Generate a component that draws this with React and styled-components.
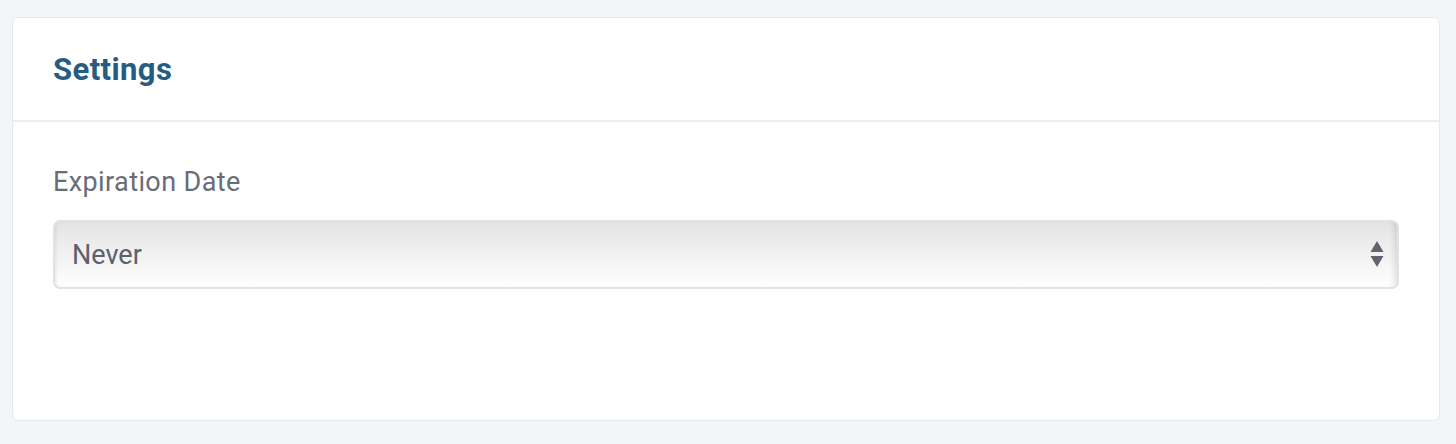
import React, { useState } from "react";
import styled, { createGlobalStyle } from "styled-components";

const GlobalStyle = createGlobalStyle`
  body {
    margin: 0;
    background: #f3f6f9;
    font-family: Roboto, "Liberation Sans", sans-serif;
  }
`;

const Page = styled.div`
  padding: 17px 16px 21px 12px;
`;

const Card = styled.section`
  background: #ffffff;
  border: 1px solid #e4e9ee;
  border-radius: 7px;
  height: 404px;
  box-sizing: border-box;
  display: flex;
  flex-direction: column;
`;

const CardHeader = styled.header`
  height: 102px;
  border-bottom: 2px solid #e9eef2;
  display: flex;
  align-items: center;
  padding: 0 40px;
`;

const Title = styled.h2`
  margin: 0;
  font-size: 31px;
  font-weight: 700;
  color: #275c82;
  letter-spacing: 0.4px;
`;

const CardBody = styled.div`
  padding: 44px 40px 0 40px;
  display: flex;
  flex-direction: column;
`;

const Label = styled.label`
  font-size: 27px;
  color: #686d78;
  line-height: 32px;
  letter-spacing: 0.4px;
  margin-bottom: 22px;
`;

const SelectBox = styled.div`
  position: relative;
  height: 69px;
  box-sizing: border-box;
  border: 2px solid #dbe5e6;
  border-radius: 7px;
  background: linear-gradient(to bottom, #e4e4e4 0%, #f1f1f1 50%, #ffffff 100%);
  box-shadow: inset 3px 0 3px -2px rgba(0, 0, 0, 0.08), inset -6px 0 6px -4px rgba(0, 0, 0, 0.12);
  display: flex;
  align-items: center;
  padding: 0 17px;
  font-size: 27px;
  color: #5c616c;
  cursor: pointer;
`;

const Value = styled.span`
  flex: 1;
`;

const Arrows = styled.svg`
  width: 14px;
  height: 27px;
  margin-right: -4px;
`;

export default function App() {
  const [value] = useState("Never");
  return (
    <>
      <GlobalStyle />
      <Page>
        <Card>
          <CardHeader>
            <Title>Settings</Title>
          </CardHeader>
          <CardBody>
            <Label>Expiration Date</Label>
            <SelectBox>
              <Value>{value}</Value>
              <Arrows viewBox="0 0 14 27">
                <path d="M7 0 L13.5 11 L0.5 11 Z" fill="#5f6470" />
                <path d="M0.5 15 L13.5 15 L7 26 Z" fill="#5f6470" />
              </Arrows>
            </SelectBox>
          </CardBody>
        </Card>
      </Page>
    </>
  );
}
